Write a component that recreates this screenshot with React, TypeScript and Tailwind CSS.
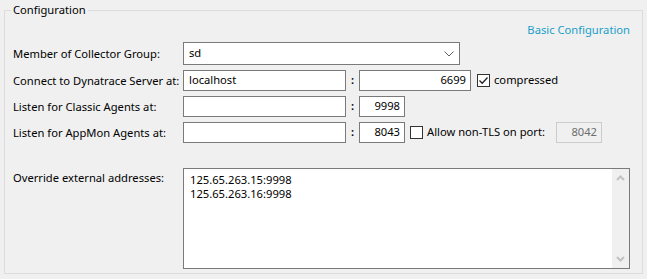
import React from 'react';

const font = { fontFamily: '"Segoe UI", "Noto Sans", "Open Sans", sans-serif' };

const Check: React.FC<{ checked?: boolean }> = ({ checked }) => (
  <span className="flex h-[13px] w-[13px] shrink-0 items-center justify-center border border-[#333333] bg-white">
    {checked && (
      <svg width="11" height="11" viewBox="0 0 11 11">
        <path d="M1.5 5.5 L4.2 8.2 L9.5 2.5" fill="none" stroke="#222222" strokeWidth="1.3" />
      </svg>
    )}
  </span>
);

const Field: React.FC<{ w: string; value?: string; right?: boolean }> = ({ w, value, right }) => (
  <div
    className={`flex h-[21px] ${w} shrink-0 items-center border border-[#7a7a7a] bg-white ${
      right ? 'justify-end pr-[4px]' : 'pl-[5px]'
    } text-[11.2px] text-black`}
  >
    {value}
  </div>
);

const Colon: React.FC = () => (
  <span className="flex w-[13px] shrink-0 justify-center text-[11.2px] font-semibold text-black">:</span>
);

const Label: React.FC<{ children: React.ReactNode }> = ({ children }) => (
  <div className="w-[170px] shrink-0 whitespace-nowrap text-[11.2px] leading-[16px] text-black">{children}</div>
);

export default function App() {
  return (
    <div className="h-[279px] w-[647px] bg-[#f0f0f0] pl-[4px] pt-[2px]" style={font}>
      <fieldset className="w-[639px] border border-[#dcdcdc] pb-[4px] pl-[8px] pr-[12px] pt-[4px]">
        <legend className="-ml-[2px] px-[2px] text-[11.2px] leading-[16px] text-black">Configuration</legend>

        <div className="flex h-[16px] justify-end whitespace-nowrap text-[11.2px] leading-[16px] text-[#1a9fc8]">
          Basic Configuration
        </div>

        <div className="mt-[4px] flex flex-col gap-[5px]">
          <div className="flex items-center">
            <Label>Member of Collector Group:</Label>
            <div className="flex h-[23px] w-[277px] items-center justify-between border border-[#7a7a7a] bg-white pl-[5px] pr-[5px] text-[11.2px] text-black">
              <span>sd</span>
              <svg width="10" height="6" viewBox="0 0 10 6">
                <path d="M0.5 0.5 L5 5 L9.5 0.5" fill="none" stroke="#606060" strokeWidth="1" />
              </svg>
            </div>
          </div>

          <div className="flex items-center">
            <Label>Connect to Dynatrace Server at:</Label>
            <Field w="w-[163px]" value="localhost" />
            <Colon />
            <Field w="w-[112px]" value="6699" right />
            <div className="ml-[6px] flex items-center gap-[4px] whitespace-nowrap text-[11.2px] text-black">
              <Check checked />
              <span>compressed</span>
            </div>
          </div>

          <div className="flex items-center">
            <Label>Listen for Classic Agents at:</Label>
            <Field w="w-[163px]" />
            <Colon />
            <Field w="w-[46px]" value="9998" right />
          </div>

          <div className="flex items-center">
            <Label>Listen for AppMon Agents at:</Label>
            <Field w="w-[163px]" />
            <Colon />
            <Field w="w-[46px]" value="8043" right />
            <div className="ml-[5px] flex items-center gap-[4px] whitespace-nowrap text-[11.2px] text-black">
              <Check />
              <span>Allow non-TLS on port:</span>
            </div>
            <div className="ml-auto mr-[28px] flex h-[21px] w-[46px] shrink-0 items-center justify-end border border-[#cccccc] bg-[#f0f0f0] pr-[4px] text-[11.2px] text-[#6d6d6d]">
              8042
            </div>
          </div>
        </div>

        <div className="mt-[25px] flex items-start">
          <div className="w-[170px] shrink-0 whitespace-nowrap pt-[2px] text-[11.2px] leading-[16px] text-black">
            Override external addresses:
          </div>
          <div className="flex h-[101px] flex-1 border border-[#7a7a7a] bg-white">
            <div className="flex-1 pl-[6px] pt-[4px] text-[11.2px] leading-[14px] text-black">
              <div>125.65.263.15:9998</div>
              <div>125.65.263.16:9998</div>
            </div>
            <div className="flex w-[17px] flex-col items-center justify-between bg-[#f0f0f0] py-[6px]">
              <svg width="9" height="6" viewBox="0 0 9 6">
                <path d="M1 5 L4.5 1.5 L8 5" fill="none" stroke="#c2c2c2" strokeWidth="2" />
              </svg>
              <svg width="9" height="6" viewBox="0 0 9 6">
                <path d="M1 1 L4.5 4.5 L8 1" fill="none" stroke="#c2c2c2" strokeWidth="2" />
              </svg>
            </div>
          </div>
        </div>
      </fieldset>
    </div>
  );
}
